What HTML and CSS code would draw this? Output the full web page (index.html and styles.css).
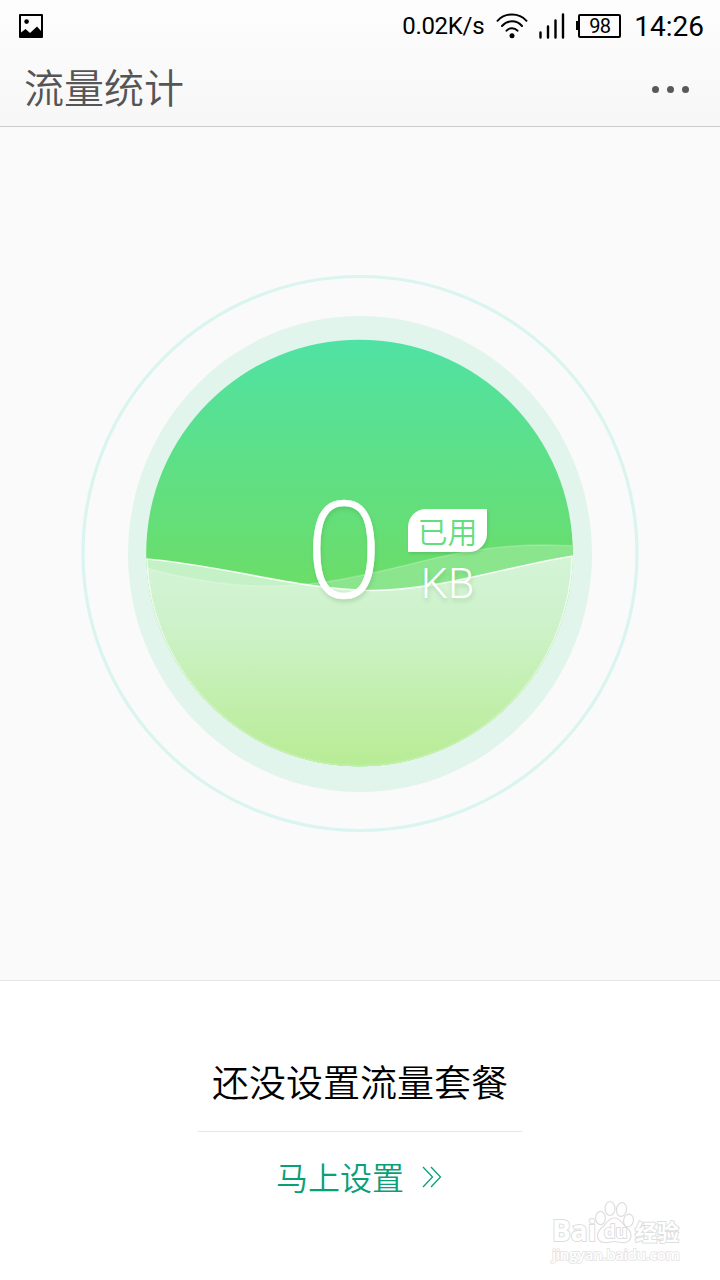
FILE: index.html
```html
<!DOCTYPE html>
<html lang="zh-CN">
<head>
    <meta charset="UTF-8">
    <meta name="viewport" content="width=device-width, initial-scale=1.0">
    <title>流量统计</title>
    <link rel="stylesheet" href="styles.css">
</head>
<body>
    <header class="top">
        <div class="status-bar">
            <svg class="picture-icon" width="24" height="24" viewBox="0 0 24 24">
                <path fill-rule="evenodd" d="M1 0H23Q24 0 24 1V23Q24 24 23 24H1Q0 24 0 23V1Q0 0 1 0ZM2 2V18.5L6.5 15L11 19L18 12.5L22 17V2Z"/>
                <circle cx="7.6" cy="7.6" r="2.3"/>
            </svg>
            <span class="speed">0.02K/s</span>
            <svg class="wifi-icon" width="32" height="26" viewBox="0 0 32 26" fill="none" stroke="#000" stroke-width="2" stroke-linecap="round">
                <path d="M1.5 7.8C9 -.6 23 -.6 30.5 7.8M6 13C11.5 6.8 20.5 6.8 26 13M10.5 17.7C13.5 14.3 18.5 14.3 21.5 17.7"/>
                <circle cx="16" cy="22.8" r="2.5" fill="#000" stroke="none"/>
            </svg>
            <svg class="signal-icon" width="26" height="26" viewBox="0 0 26 26" stroke="#000" stroke-width="2.4" stroke-linecap="round">
                <path d="M1.5 19.5V24.5M9 13.5V24.5M16.5 7.5V24.5M24 1.5V24.5"/>
            </svg>
            <div class="battery">98</div>
            <span class="clock">14:26</span>
        </div>
        <div class="title-bar">
            <h1>流量统计</h1>
            <div class="more"><i></i><i></i><i></i></div>
        </div>
    </header>

    <main class="stage">
        <div class="gauge">
            <svg width="560" height="560" viewBox="0 0 560 560">
                <defs>
                    <linearGradient id="sky" gradientUnits="userSpaceOnUse" x1="0" y1="67" x2="0" y2="318">
                        <stop offset="0" stop-color="#50e2a4"/>
                        <stop offset="1" stop-color="#6cdd67"/>
                    </linearGradient>
                    <linearGradient id="water" gradientUnits="userSpaceOnUse" x1="0" y1="285" x2="0" y2="493">
                        <stop offset="0" stop-color="#d4f4d6"/>
                        <stop offset="0.3" stop-color="#cef2cb"/>
                        <stop offset="1" stop-color="#b8ec94"/>
                    </linearGradient>
                    <linearGradient id="rim" gradientUnits="userSpaceOnUse" x1="0" y1="285" x2="0" y2="493">
                        <stop offset="0" stop-color="#fff" stop-opacity=".8"/>
                        <stop offset="1" stop-color="#fff" stop-opacity=".15"/>
                    </linearGradient>
                    <clipPath id="ball"><circle cx="279.5" cy="280" r="213.3"/></clipPath>
                    <clipPath id="front"><path d="M60 285.5L66 286C137 291 222 317.5 292 317.5C358 317.5 424 294 493 283L500 282V500H60Z"/></clipPath>
                </defs>
                <circle cx="280" cy="280.5" r="277" fill="none" stroke="#daf5ef" stroke-width="3.2"/>
                <ellipse cx="280" cy="281" rx="232" ry="238" fill="#e1f5ec"/>
                <g clip-path="url(#ball)">
                    <rect x="60" y="60" width="440" height="440" fill="url(#sky)"/>
                    <path fill="#8ae58c" d="M60 294L66 295C135 314 190 317 245 309C330 296 375 272 465 272L500 273V500H60Z"/>
                    <path fill="#c5f1c6" d="M60 285.5L66 286C137 291 222 317.5 292 317.5C358 317.5 424 294 493 283L500 282V500H60Z"/>
                    <g clip-path="url(#front)">
                        <path fill="url(#water)" d="M60 294L66 295C135 314 190 317 245 309C330 296 375 272 465 272L500 273V500H60Z"/>
                        <path fill="none" stroke="url(#rim)" stroke-width="2.5" d="M66.2 280A213.3 213.3 0 0 0 492.8 280"/>
                    </g>
                    <path fill="none" stroke="#fff" stroke-opacity=".22" stroke-width="1.5" d="M60 294L66 295C135 314 190 317 245 309C330 296 375 272 465 272L500 273"/>
                    <path fill="none" stroke="#fff" stroke-opacity=".85" stroke-width="1.7" d="M60 285.5L66 286C137 291 222 317.5 292 317.5C358 317.5 424 294 493 283L500 282"/>
                </g>
            </svg>
            <div class="reading">
                <span class="amount">0</span>
                <div class="side">
                    <span class="tag">已用</span>
                    <span class="unit">KB</span>
                </div>
            </div>
        </div>
    </main>

    <footer class="plan">
        <h2>还没设置流量套餐</h2>
        <a class="setup">
            <span>马上设置</span>
            <svg width="20" height="22" viewBox="0 0 20 22" fill="none" stroke="#0aa077" stroke-width="1.3">
                <path d="M1 1L10.5 11L1 21M9 1L18.5 11L9 21"/>
            </svg>
        </a>
        <div class="watermark">
            <div class="mark-row">
                <span class="bai">Bai</span>
                <div class="paw">
                    <svg width="40" height="44" viewBox="0 0 40 44" fill="#fff" stroke="#dedede" stroke-width="1.2">
                        <ellipse cx="5.5" cy="18" rx="4.9" ry="6.6"/>
                        <ellipse cx="15" cy="8.5" rx="5" ry="7"/>
                        <ellipse cx="26.5" cy="9.5" rx="5" ry="7" transform="rotate(10 26.5 9.5)"/>
                        <ellipse cx="33.5" cy="20.5" rx="4.9" ry="6.5" transform="rotate(10 33.5 20.5)"/>
                        <path d="M19.5 18C26 18 27 24 32 28C38 33 37 41.5 30 42.5C25 43 23 41.5 19.5 41.5C16 41.5 14 43 9 42.5C1 41.5 1 33 6 28.5C11 24.5 13 18 19.5 18Z"/>
                    </svg>
                    <span class="du">du</span>
                </div>
                <span class="jingyan">经验</span>
            </div>
            <div class="site">jingyan.baidu.com</div>
        </div>
    </footer>
</body>
</html>
```

FILE: styles.css
```css
* {
    margin: 0;
    padding: 0;
    box-sizing: border-box;
}

body {
    width: 720px;
    height: 1280px;
    display: flex;
    flex-direction: column;
    overflow: hidden;
    background: #fafafa;
    color: #000;
    font-family: Roboto, "Noto Sans CJK SC", sans-serif;
}

.top {
    height: 127px;
    background: linear-gradient(#fdfdfd, #f7f7f7);
    border-bottom: 1px solid #cdcdcd;
}

.status-bar {
    height: 50px;
    display: flex;
    align-items: center;
    padding: 2px 16px 0 19px;
}

.speed {
    margin-left: auto;
    font-size: 24px;
    letter-spacing: -0.3px;
}

.wifi-icon {
    margin-left: 12px;
}

.signal-icon {
    margin-left: 11px;
}

.battery {
    position: relative;
    width: 43px;
    height: 24px;
    margin-left: 13px;
    border: 2px solid #000;
    border-radius: 2px;
    font-size: 20px;
    letter-spacing: -0.6px;
    line-height: 21px;
    text-align: center;
}

.battery::before {
    content: "";
    position: absolute;
    left: -4px;
    top: 5px;
    width: 3px;
    height: 9px;
    background: #000;
}

.clock {
    margin-left: 13px;
    font-size: 28px;
}

.title-bar {
    height: 76px;
    display: flex;
    justify-content: space-between;
    align-items: center;
    padding: 0 31px 0 24px;
}

h1 {
    color: #555;
    font-size: 40px;
    font-weight: 350;
    line-height: 76px;
    padding-top: 3px;
}

.more {
    display: flex;
    gap: 8px;
    padding-top: 3px;
}

.more i {
    width: 7px;
    height: 7px;
    border-radius: 50%;
    background: #595959;
}

.stage {
    height: 853px;
    padding-top: 146px;
}

.gauge {
    position: relative;
    width: 560px;
    height: 560px;
    margin: 0 auto;
}

.gauge svg {
    display: block;
}

/* sits over the waves */
.reading {
    position: absolute;
    left: 225px;
    top: 226px;
    display: flex;
    color: #fff;
    text-shadow: 1px 3px 4px rgba(40, 120, 50, 0.2);
}

.amount {
    width: 78px;
    font-family: "Open Sans", sans-serif;
    font-size: 134px;
    font-weight: 300;
    line-height: 94px;
    text-align: center;
    -webkit-text-stroke: 0.6px #fff;
}

.side {
    margin: 10px 0 0 25px;
}

.tag {
    display: block;
    width: 79px;
    height: 43px;
    background: #fff;
    border-radius: 18px 0;
    box-shadow: 1px 2px 3px rgba(40, 120, 50, 0.2);
    color: #62de7f;
    font-size: 30px;
    font-weight: 350;
    line-height: 47px;
    text-align: center;
    text-shadow: none;
}

.unit {
    display: block;
    font-size: 43px;
    font-weight: 300;
    line-height: 62px;
    text-align: center;
}

.plan {
    position: relative;
    height: 300px;
    display: flex;
    flex-direction: column;
    align-items: center;
    padding-top: 60px;
    background: #fff;
    border-top: 1px solid #e6e6e6;
}

h2 {
    width: 324px;
    height: 91px;
    border-bottom: 1px solid #e6e6e6;
    font-size: 37px;
    font-weight: 350;
    line-height: 87px;
    text-align: center;
}

.setup {
    display: flex;
    align-items: center;
    gap: 18px;
    height: 90px;
    padding-right: 2px;
    color: #0aa077;
    font-size: 32px;
    font-weight: 350;
    line-height: 40px;
}

.setup span {
    padding-top: 4px;
}

.watermark {
    position: absolute;
    left: 552px;
    top: 219px;
    color: #fff;
    font-family: "Open Sans", "Noto Sans CJK SC", sans-serif;
    -webkit-text-stroke: 2px #dedede;
    paint-order: stroke fill;
}

.mark-row {
    display: flex;
    align-items: flex-end;
    height: 42px;
}

.bai {
    width: 43px;
    font-size: 28px;
    font-weight: 700;
    line-height: 24px;
}

.paw {
    position: relative;
    width: 40px;
    height: 42px;
}

.paw svg {
    paint-order: normal;
}

.du {
    position: absolute;
    left: 9px;
    top: 21px;
    font-size: 18px;
    font-weight: 700;
    line-height: 20px;
}

.jingyan {
    font-size: 22px;
    font-weight: 700;
    line-height: 22px;
}

.site {
    margin-top: 4px;
    color: #fff;
    font-size: 15px;
    font-weight: 600;
    line-height: 17px;
    letter-spacing: -0.3px;
    -webkit-text-stroke: 1.5px #e2e2e2;
}
```
